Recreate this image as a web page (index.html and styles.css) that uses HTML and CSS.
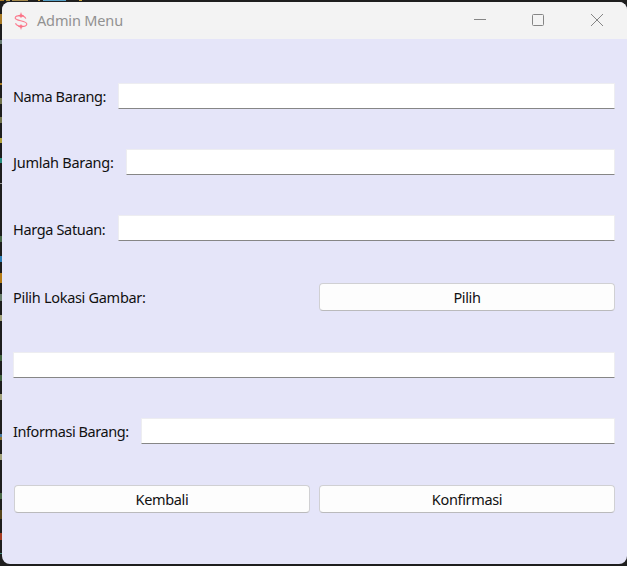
FILE: index.html
```html
<!DOCTYPE html>
<html lang="id">
<head>
<meta charset="utf-8">
<title>Admin Menu</title>
<link rel="stylesheet" href="styles.css">
</head>
<body>
<div class="window">
  <header class="titlebar">
    <svg class="logo" width="14" height="18" viewBox="0 0 14 18" fill="none" stroke="#fb7f92" stroke-width="1.2">
      <path d="M11.8 6.6C10.5 3.3 1.2 2.4 1.2 6C1.2 9.2 12.8 8.3 12.8 12C12.8 15.6 3.2 15.2 1.5 11.2"/>
      <path fill="#fb7185" stroke="none" d="M7 0l.8 2.6 2.4 1.1-2.4 1L7 6.2l-.8-1.5-2.4-1 2.4-1.1zM7 12l.8 1.4 2.4 1-2.4 1L7 18l-.8-2.6-2.4-1 2.4-1z"/>
    </svg>
    <h1 class="title">Admin Menu</h1>
    <div class="controls">
      <svg width="14" height="14" viewBox="0 0 14 14"><path d="M1 6.5h12"/></svg>
      <svg width="14" height="14" viewBox="0 0 14 14"><rect x="1.5" y="1.5" width="11" height="11" rx="1"/></svg>
      <svg width="14" height="14" viewBox="0 0 14 14"><path d="M1 1l12 12M13 1L1 13"/></svg>
    </div>
  </header>
  <form class="form">
    <div class="row"><label class="label nama" for="nama">Nama Barang:</label><input id="nama" class="field"></div>
    <div class="row"><label class="label jumlah" for="jumlah">Jumlah Barang:</label><input id="jumlah" class="field"></div>
    <div class="row"><label class="label harga" for="harga">Harga Satuan:</label><input id="harga" class="field"></div>
    <div class="row split pick"><span class="label lokasi">Pilih Lokasi Gambar:</span><button type="button" class="button">Pilih</button></div>
    <div class="row path"><input class="field"></div>
    <div class="row"><label class="label info" for="info">Informasi Barang:</label><input id="info" class="field"></div>
    <div class="row split actions"><button type="button" class="button">Kembali</button><button type="button" class="button">Konfirmasi</button></div>
  </form>
</div>
</body>
</html>
```
FILE: styles.css
```css
* { box-sizing: border-box; }

body {
  margin: 0;
  height: 566px;
  padding: 2px 0 2px 2px;
  overflow: hidden;
  font-family: "Noto Sans", "Open Sans", sans-serif;
  background:
    linear-gradient(90deg, #a77a24 0 4px, #1e1e1e 4px 6px, #b89b42 6px 10px, #1e1e1e 10px 12px, #a58a4c 12px 28px, #1e1e1e 28px 38px, #c09b34 38px 40px, #1e1e1e 40px 43px, #559fc5 43px 66px, #1e1e1e 66px 79px, #c7a23a 79px 82px, transparent 82px) 0 0 / 100% 1px no-repeat,
    linear-gradient(#1e1e1e 14px, #a77a24 14px 24px, #1e1e1e 24px 40px, #667a70 40px 44px, #1e1e1e 44px 83px, #a77a24 83px 85px, #1e1e1e 85px 98px, #70734c 98px 104px, #1e1e1e 104px 117px, #70734c 117px 123px, #1e1e1e 123px 138px, #b0a03b 138px 143px, #1e1e1e 143px 158px, #268c7d 158px 163px, #1e1e1e 163px 183px, #999 183px 184px, #1e1e1e 184px 236px, #486747 236px 242px, #1e1e1e 242px 256px, #2b7db5 256px 262px, #1e1e1e 262px 273px, #b57b16 273px 283px, #1e1e1e 283px 294px, #687d6c 294px 301px, #1e1e1e 301px 315px, #a0a079 315px 321px, #1e1e1e 321px 355px, #41623f 355px 361px, #1e1e1e 361px 375px, #41623f 375px 381px, #1e1e1e 381px 394px, #a0a079 394px 400px, #1e1e1e 400px 434px, #4879a0 434px 437px, #8e722a 437px 440px, #1e1e1e 440px 454px, #a0a079 454px 460px, #1e1e1e 460px 493px, #486747 493px 499px, #1e1e1e 499px 510px, #55451b 510px 519px, #1e1e1e 519px 533px, #a43b22 533px 540px, #1e1e1e 540px 553px, #438b80 553px 554px, #1e1e1e 554px) 0 0 / 2px 100% no-repeat,
    #1e1e1e;
}

.window {
  height: 562px;
  overflow: hidden;
  border-radius: 8px;
  background: #e5e5f9;
}

.titlebar {
  display: flex;
  align-items: center;
  height: 37px;
  padding: 0 23px 0 12px;
  background: #f3f3f3;
}

.title {
  margin: -2px 0 0 9px;
  font-size: 14.5px;
  font-weight: 400;
  line-height: 20px;
  letter-spacing: -0.15px;
  color: #919191;
}

.controls {
  display: flex;
  gap: 44px;
  margin: -1px 0 0 auto;
  fill: none;
  stroke: #858585;
  stroke-width: 1;
}

.controls svg:last-child { margin-left: 1px; }

.form {
  display: flex;
  flex-direction: column;
  gap: 40px;
  padding: 44px 12px 0 11px;
}

.row {
  display: flex;
  align-items: center;
  gap: 12px;
  height: 26px;
}

.split {
  display: grid;
  grid-template-columns: 297px 296px;
  gap: 9px;
  height: 28px;
}

.pick { margin-top: 2px; }
.path { margin-top: 1px; }
.actions { margin-top: 1px; padding-left: 1px; grid-template-columns: 296px 296px; }

.label {
  flex: none;
  font-size: 14.5px;
  line-height: 20px;
  white-space: nowrap;
  color: #111;
}

.nama { width: 93px; letter-spacing: -0.4px; }
.jumlah { width: 101px; letter-spacing: -0.26px; }
.harga { width: 93px; padding-top: 2px; letter-spacing: -0.34px; }
.lokasi { letter-spacing: -0.3px; }
.info { width: 116px; letter-spacing: -0.42px; }

.field {
  flex: 1;
  min-width: 0;
  height: 26px;
  padding: 2px 6px;
  border: 1px solid #ededf1;
  border-bottom-color: #868686;
  border-radius: 0;
  background: #fff;
  outline: none;
}

.button {
  height: 28px;
  padding: 0;
  border: 1px solid #d0d0d3;
  border-bottom-color: #bababc;
  border-radius: 4px;
  background: #fdfdfd;
  font: 14.5px/20px "Noto Sans", "Open Sans", sans-serif;
  letter-spacing: -0.35px;
  color: #111;
}
```
